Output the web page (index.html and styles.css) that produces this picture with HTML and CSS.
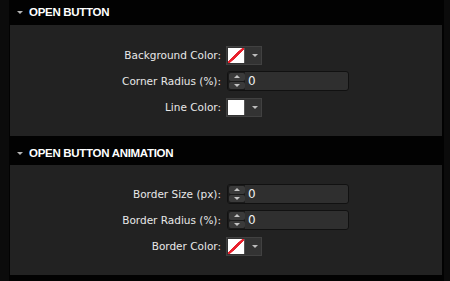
FILE: index.html
```html
<!DOCTYPE html>
<html lang="en">
<head>
  <meta charset="UTF-8">
  <title>Button Settings</title>
  <link rel="stylesheet" href="styles.css">
</head>
<body>

<div class="wrap">

  <div class="section">
    <div class="section-head"><span class="caret"></span>OPEN BUTTON</div>
    <div class="panel">
      <div class="row">
        <label class="label">Background Color:</label>
        <div class="swatch"><span class="chip none"></span><span class="drop"></span></div>
      </div>
      <div class="row">
        <label class="label">Corner Radius (%):</label>
        <div class="number">
          <div class="spin"><span class="up"></span><span class="down"></span></div>
          <input class="field" type="text" value="0">
        </div>
      </div>
      <div class="row">
        <label class="label">Line Color:</label>
        <div class="swatch"><span class="chip"></span><span class="drop"></span></div>
      </div>
    </div>
  </div>

  <div class="section second">
    <div class="section-head"><span class="caret"></span>OPEN BUTTON ANIMATION</div>
    <div class="panel">
      <div class="row">
        <label class="label">Border Size (px):</label>
        <div class="number">
          <div class="spin"><span class="up"></span><span class="down"></span></div>
          <input class="field" type="text" value="0">
        </div>
      </div>
      <div class="row">
        <label class="label">Border Radius (%):</label>
        <div class="number">
          <div class="spin"><span class="up"></span><span class="down"></span></div>
          <input class="field" type="text" value="0">
        </div>
      </div>
      <div class="row">
        <label class="label">Border Color:</label>
        <div class="swatch"><span class="chip none"></span><span class="drop"></span></div>
      </div>
    </div>
  </div>

</div>

</body>
</html>
```

FILE: styles.css
```css
html, body {
  margin: 0;
  height: 100%;
}
body {
  background: #0b0b0b;
  font-family: 'DejaVu Sans', sans-serif;
  color: #e6e6e6;
  overflow: hidden;
}
.wrap {
  margin: 0 6px 0 9px;
  padding: 0 2px 0 1px;
  background: #020202;
  height: 100%;
}
.section-head {
  height: 25px;
  display: flex;
  align-items: center;
  padding-left: 7px;
  padding-bottom: 1px;
  box-sizing: border-box;
  font-family: 'Liberation Sans', sans-serif;
  font-weight: bold;
  font-size: 11.5px;
  letter-spacing: -0.3px;
  color: #ffffff;
}
.second .section-head {
  margin-top: 6px;
  height: 23px;
}
.caret {
  width: 0;
  height: 0;
  border-left: 3px solid transparent;
  border-right: 3px solid transparent;
  border-top: 3px solid #b5b5b5;
  margin-right: 6px;
}
.panel {
  background: #222222;
  padding: 20px 0 19px 0;
  display: flex;
  flex-direction: column;
  gap: 6px;
}
.second .panel {
  padding-top: 19px;
}
.row {
  display: grid;
  grid-template-columns: 211px auto;
  column-gap: 5px;
  align-items: center;
  height: 20px;
}
.label {
  text-align: right;
  font-size: 10.5px;
  color: #e8e8e8;
}
.swatch {
  width: 34px;
  height: 17px;
  border: 1px solid #414141;
  background: #333333;
  display: flex;
  align-items: center;
}
.chip {
  width: 16px;
  height: 15px;
  margin-left: 1px;
  background: #ffffff;
  border-right: 1px solid #555;
}
.chip.none {
  background: linear-gradient(to bottom right, #ffffff calc(50% - 1.4px), #e8202c calc(50% - 1.2px), #e8202c calc(50% + 1.2px), #ffffff calc(50% + 1.4px));
}
.drop {
  margin-left: 7px;
  width: 0;
  height: 0;
  border-left: 3px solid transparent;
  border-right: 3px solid transparent;
  border-top: 3px solid #bdbdbd;
}
.number {
  margin-left: 1px;
  width: 122px;
  height: 20px;
  box-sizing: border-box;
  border: 1px solid #111111;
  border-radius: 3px;
  background: #2f2f2f;
  display: flex;
}
.spin {
  width: 16px;
  display: flex;
  flex-direction: column;
  gap: 1px;
  padding: 1px 0 1px 1px;
  background: #1a1a1a;
}
.spin span {
  flex: 1;
  background: #3a3a3a;
  border-radius: 2px;
  display: flex;
  align-items: center;
  justify-content: center;
}
.spin .up::before {
  content: "";
  border-left: 3px solid transparent;
  border-right: 3px solid transparent;
  border-bottom: 3px solid #c4c4c4;
}
.spin .down::before {
  content: "";
  border-left: 3px solid transparent;
  border-right: 3px solid transparent;
  border-top: 3px solid #c4c4c4;
}
.field {
  flex: 1;
  min-width: 0;
  border: 0;
  background: transparent;
  color: #f0f0f0;
  font-family: 'DejaVu Sans', sans-serif;
  font-size: 12px;
  padding: 0 0 0 3px;
  outline: none;
}
```
